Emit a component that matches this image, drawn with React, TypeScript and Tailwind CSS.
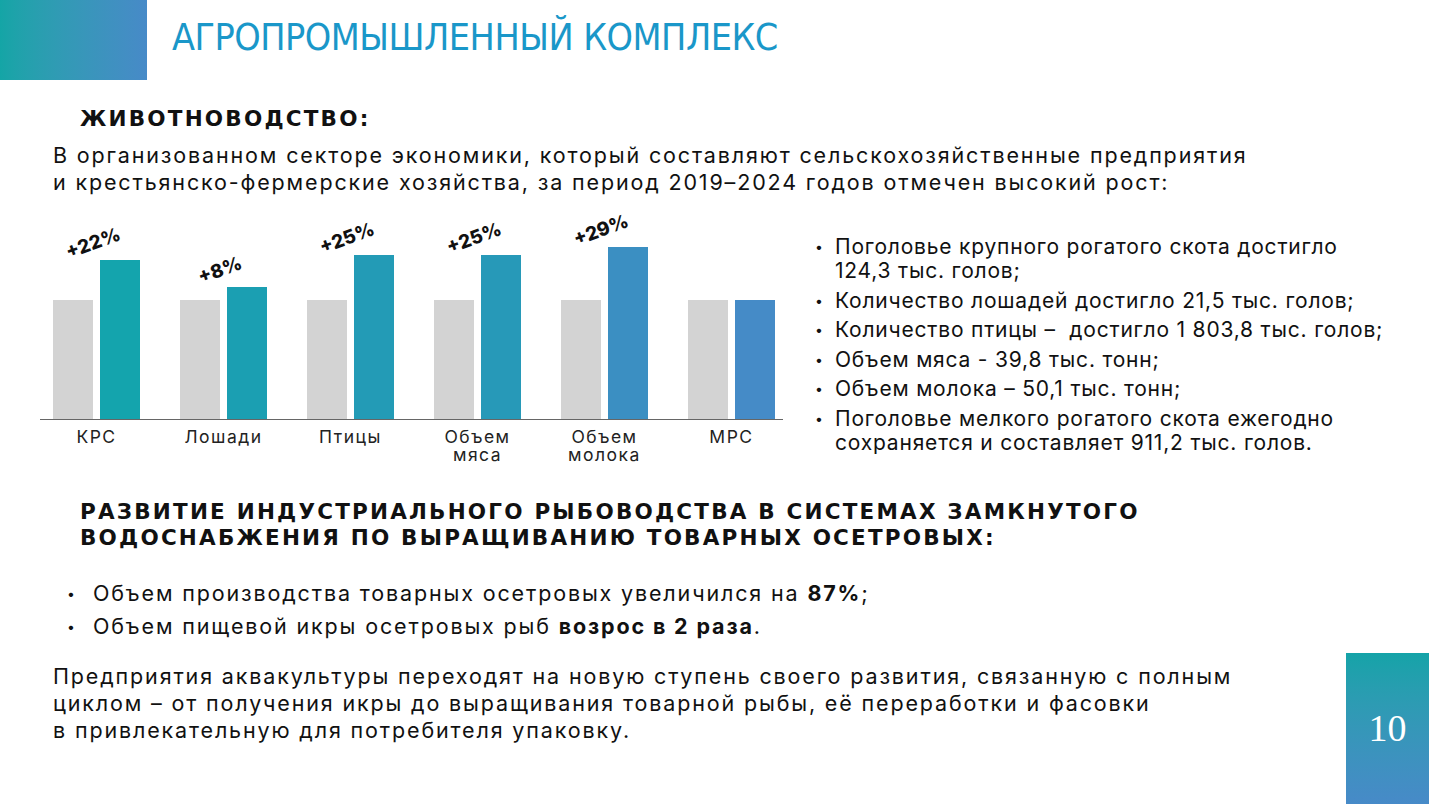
import React from "react";

const bars = [
  { name: ["КРС"], h: 159, color: "bg-[#14a4ad]", label: "+22%" },
  { name: ["Лошади"], h: 132, color: "bg-[#1b9fb2]", label: "+8%" },
  { name: ["Птицы"], h: 164, color: "bg-[#239bb6]", label: "+25%" },
  { name: ["Объем", "мяса"], h: 164, color: "bg-[#2799b8]", label: "+25%" },
  { name: ["Объем", "молока"], h: 172, color: "bg-[#3b8fc2]", label: "+29%" },
  { name: ["МРС"], h: 119, color: "bg-[#458bc7]", label: "" },
];

const rightBullets = [
  ["Поголовье крупного рогатого скота достигло", "124,3 тыс. голов;"],
  ["Количество лошадей достигло 21,5 тыс. голов;"],
  ["Количество птицы –  достигло 1 803,8 тыс. голов;"],
  ["Объем мяса - 39,8 тыс. тонн;"],
  ["Объем молока – 50,1 тыс. тонн;"],
  ["Поголовье мелкого рогатого скота ежегодно", "сохраняется и составляет 911,2 тыс. голов."],
];

export default function App() {
  return (
    <div className="relative w-[1429px] h-[804px] overflow-hidden bg-white text-[#111] font-['Inter','Noto_Sans',sans-serif]">
      {/* header */}
      <div className="flex items-center h-[80px]">
        <div className="w-[147px] h-[80px] bg-gradient-to-r from-[#14a5a6] to-[#478ac8]" />
        <h1 className="ml-[25px] mt-[-4px] text-[37.4px] leading-none text-[#1a97c9] font-['Liberation_Sans_Narrow','DejaVu_Sans_Condensed',sans-serif] tracking-[-0.5px]">
          АГРОПРОМЫШЛЕННЫЙ КОМПЛЕКС
        </h1>
      </div>

      <div className="pl-[80px] mt-[26px] text-[21.5px] leading-[26px] font-bold tracking-[2.2px] font-['DejaVu_Sans',sans-serif]">
        ЖИВОТНОВОДСТВО:
      </div>
      <p className="pl-[53px] mt-[10px] text-[21.5px] leading-[27px] tracking-[1.85px]">
        В организованном секторе экономики, который составляют сельскохозяйственные предприятия
        <br />и крестьянско-фермерские хозяйства, за период 2019–2024 годов отмечен высокий рост:
      </p>

      <div className="flex mt-[22px]">
        {/* chart */}
        <div className="ml-[40px] w-[743px] flex flex-col">
          <div className="flex h-[202px] items-end border-b-[1.5px] border-[#666]">
            {bars.map((b, i) => (
              <div key={i} className="w-[127px] shrink-0 pl-[13px] flex items-end gap-[7px]">
                <div className="w-[40px] h-[119px] bg-[#d3d3d3]" />
                <div className={`relative w-[40px] ${b.color}`} style={{ height: b.h }}>
                  {b.label && (
                    <div className="absolute left-[-7px] top-[-17px] -translate-x-1/2 -translate-y-1/2 -rotate-[20deg] whitespace-nowrap text-[19px] font-extrabold leading-none text-[#111]">
                      {b.label}
                    </div>
                  )}
                </div>
              </div>
            ))}
          </div>
          <div className="flex pt-[8px]">
            {bars.map((b, i) => (
              <div key={i} className="w-[127px] shrink-0 pl-[13px]">
                <p className="w-[87px] text-center text-[17.5px] leading-[18px] tracking-[1.5px] text-[#222] whitespace-pre-line">
                  {b.name.join("\n")}
                </p>
              </div>
            ))}
          </div>
        </div>

        {/* right bullets */}
        <ul className="ml-[32px] mt-[17px] flex flex-col gap-[5.5px] text-[21px] leading-[24px] tracking-[0.8px]">
          {rightBullets.map((lines, i) => (
            <li key={i} className="flex">
              <span className="w-[20px] shrink-0 text-[14px] tracking-normal">•</span>
              <span className="whitespace-pre">{lines.join("\n")}</span>
            </li>
          ))}
        </ul>
      </div>

      <div className="pl-[80px] mt-[35px] text-[21.5px] leading-[26px] font-bold tracking-[2.2px] font-['DejaVu_Sans',sans-serif]">
        РАЗВИТИЕ ИНДУСТРИАЛЬНОГО РЫБОВОДСТВА В СИСТЕМАХ ЗАМКНУТОГО
        <br />
        ВОДОСНАБЖЕНИЯ ПО ВЫРАЩИВАНИЮ ТОВАРНЫХ ОСЕТРОВЫХ:
      </div>

      <ul className="pl-[67px] mt-[29px] flex flex-col gap-[6px] text-[21.5px] leading-[27px] tracking-[1.85px]">
        <li className="flex">
          <span className="w-[26px] shrink-0 text-[14px] tracking-normal">•</span>
          <span>
            Объем производства товарных осетровых увеличился на <b>87%</b>;
          </span>
        </li>
        <li className="flex">
          <span className="w-[26px] shrink-0 text-[14px] tracking-normal">•</span>
          <span>
            Объем пищевой икры осетровых рыб <b>возрос в 2 раза</b>.
          </span>
        </li>
      </ul>

      <p className="pl-[53px] mt-[23px] text-[21.5px] leading-[27px] tracking-[1.85px]">
        Предприятия аквакультуры переходят на новую ступень своего развития, связанную с полным
        <br />
        циклом – от получения икры до выращивания товарной рыбы, её переработки и фасовки
        <br />в привлекательную для потребителя упаковку.
      </p>

      <div className="absolute right-0 bottom-0 w-[83px] h-[151px] flex items-center justify-center bg-gradient-to-b from-[#14a3a8] to-[#478ac8]">
        <span className="text-white text-[38px] font-['Liberation_Serif',serif]">10</span>
      </div>
    </div>
  );
}
